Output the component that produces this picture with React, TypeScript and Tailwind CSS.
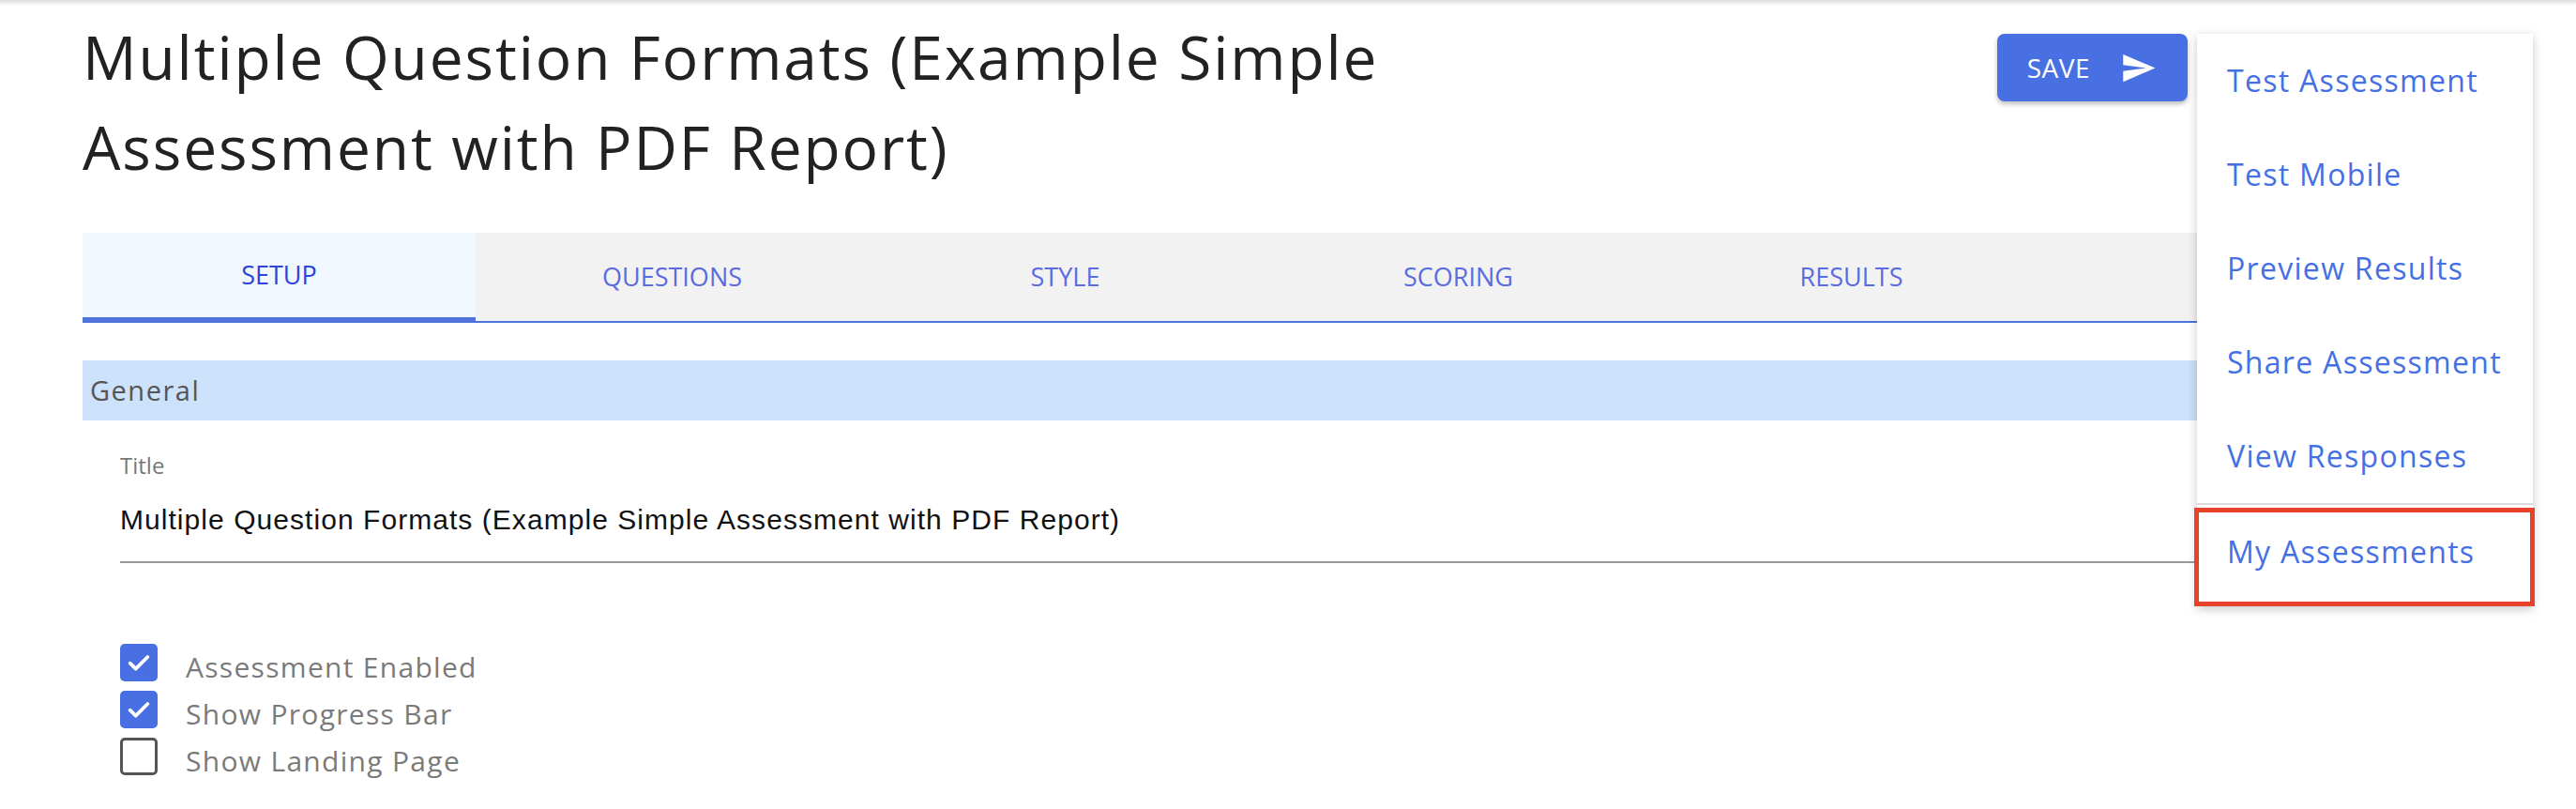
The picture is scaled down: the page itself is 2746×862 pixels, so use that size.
import React from "react";

function Check() {
  return (
    <svg viewBox="0 0 24 24" className="w-[32px] h-[32px]" fill="none">
      <path d="M5 12.5l4.5 4.5L19 7.5" stroke="white" strokeWidth="2.8" strokeLinecap="round" strokeLinejoin="round" />
    </svg>
  );
}

function CheckRow({ label, checked }: { label: string; checked: boolean }) {
  return (
    <div className="flex items-start h-[50px]">
      {checked ? (
        <div className="w-[40px] h-[40px] rounded-[5px] bg-[#4870e2] flex items-center justify-center">
          <Check />
        </div>
      ) : (
        <div className="w-[40px] h-[40px] rounded-[5px] border-[3px] border-[#555555] bg-white" />
      )}
      <span className="ml-[30px] mt-[5px] text-[30px] leading-[40px] tracking-[1.3px] text-[#7a7a7a]">{label}</span>
    </div>
  );
}

const tabs = ["SETUP", "QUESTIONS", "STYLE", "SCORING", "RESULTS"];
const menuItems = ["Test Assessment", "Test Mobile", "Preview Results", "Share Assessment", "View Responses"];

export default function App() {
  return (
    <div className="relative w-[2746px] h-[862px] overflow-hidden bg-white font-['Open_Sans',sans-serif]">
      <div className="absolute top-0 inset-x-0 h-[6px] bg-linear-to-b from-[#dedede] to-white" />
      <div className="px-[88px] pt-[13px]">
        <header className="flex items-start justify-between">
          <h1 className="text-[64px] leading-[96px] tracking-[1.9px] text-[#222222] font-normal">
            Multiple Question Formats (Example Simple
            <br />
            Assessment with PDF Report)
          </h1>
          <div className="flex items-start mt-[23px]">
            <button className="flex items-center h-[72px] pl-[32px] pr-[33px] rounded-[8px] bg-[#4870e2] text-white text-[28px] tracking-[0.5px] shadow-[0_3px_5px_rgba(0,0,0,0.25)]">
              <span>SAVE</span>
              <svg viewBox="0 0 24 24" className="ml-[32px] w-[39px] h-[39px]" fill="white">
                <path d="M2.01 21L23 12 2.01 3 2 10l15 2-15 2z" />
              </svg>
            </button>
            <div className="w-[326px]" />
          </div>
        </header>

        <div className="mt-[43px] flex h-[96px] bg-[#f2f2f2] border-b-2 border-[#4e74db]">
          {tabs.map((t, i) => (
            <div
              key={t}
              className={
                i === 0
                  ? "w-[419px] h-full flex items-center justify-center bg-[#f0f7fe] border-b-4 border-[#4e74db] text-[27px] text-[#2c44d8]"
                  : "w-[419px] h-full flex items-center justify-center text-[27px] text-[#5a6ce0]"
              }
            >
              <span>{t}</span>
            </div>
          ))}
        </div>

        <div className="mt-[40px] h-[64px] bg-[#cce1fa] flex items-center pl-[8px] text-[29px] tracking-[1.5px] text-[#555555]">
          General
        </div>

        <div className="mt-[32px] pl-[40px]">
          <div className="text-[24px] leading-[32px] text-[#777777]">Title</div>
          <div className="mt-[22px] pb-[24px] border-b-2 border-[#9a9a9a] font-['Liberation_Sans',Arial,sans-serif] text-[30px] leading-[40px] tracking-[1.05px] text-[#111111]">
            Multiple Question Formats (Example Simple Assessment with PDF Report)
          </div>
        </div>

        <div className="mt-[86px] pl-[40px] flex flex-col">
          <CheckRow label="Assessment Enabled" checked />
          <CheckRow label="Show Progress Bar" checked />
          <CheckRow label="Show Landing Page" checked={false} />
        </div>
      </div>

      <div className="absolute left-[2342px] top-[36px] w-[358px] bg-white pb-[8px] shadow-[0_3px_10px_rgba(0,0,0,0.22)]">
        {menuItems.map((m) => (
          <div key={m} className="h-[100px] flex items-center pl-[32px] text-[32px] tracking-[1.3px] text-[#4570e3]">
            {m}
          </div>
        ))}
        <div className="h-[2px] bg-[#dddddd]" />
        <div className="relative h-[100px] flex items-center pl-[32px] text-[32px] tracking-[1.3px] text-[#4570e3]">
          My Assessments
          <div className="absolute left-[-3px] right-[-2px] top-[3px] bottom-[-8px] border-[5px] border-[#e8432a]" />
        </div>
      </div>
    </div>
  );
}
